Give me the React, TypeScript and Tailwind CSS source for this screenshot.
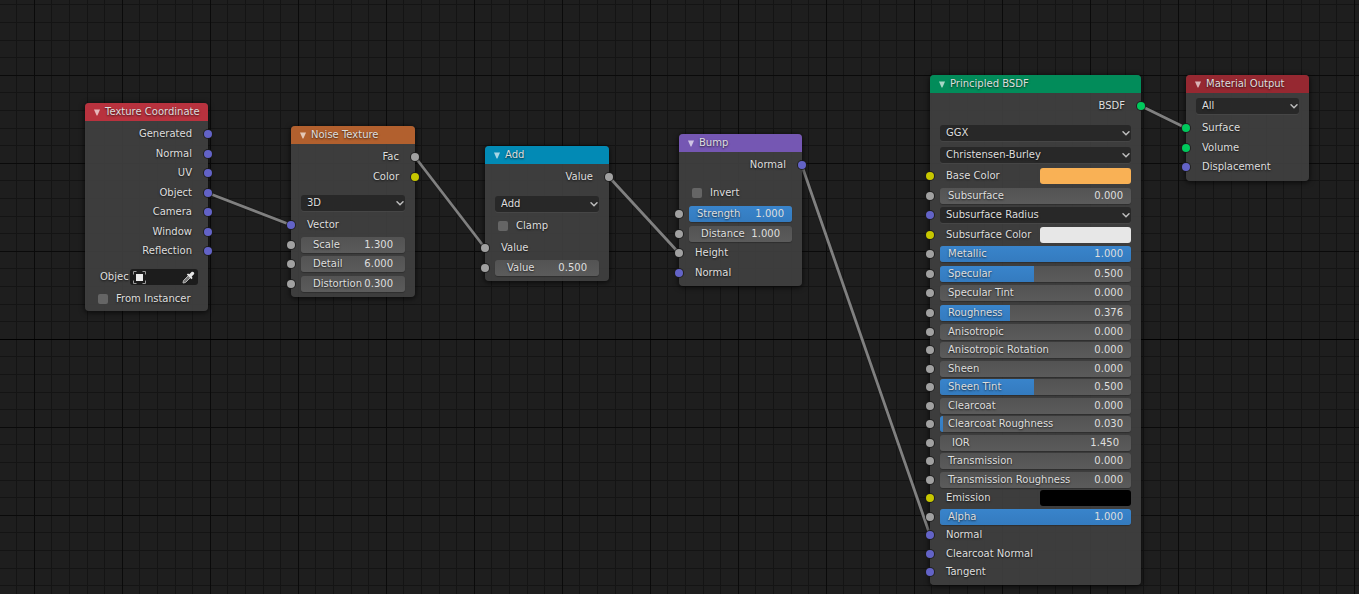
import { ReactNode, useId } from "react";

type SocketKind = "vector" | "value" | "color" | "shader";

const socketColors: Record<SocketKind, string> = {
  vector: "bg-[#6363c7]",
  value: "bg-[#a1a1a1]",
  color: "bg-[#c7c700]",
  shader: "bg-[#00c95c]",
};

interface SocketProps {
  kind: SocketKind;
  side: "left" | "right";
}

function Socket({ kind, side }: SocketProps) {
  return (
    <span
      className={`absolute top-1/2 size-2 -translate-y-1/2 rounded-full ring-1 ring-[#1a1a1a]/80 ${
        side === "left" ? "-left-1" : "-right-1"
      } ${socketColors[kind]}`}
    />
  );
}

interface RowProps {
  input?: SocketKind;
  output?: SocketKind;
  tight?: boolean;
  children: ReactNode;
}

function Row({ input, output, tight, children }: RowProps) {
  return (
    <li
      className={`relative flex items-center px-2.5 ${
        tight ? "odd:h-[19px] even:h-[18px]" : "odd:h-5 even:h-[19px]"
      }`}
    >
      {input && <Socket kind={input} side="left" />}
      {children}
      {output && <Socket kind={output} side="right" />}
    </li>
  );
}

function Output({ label, kind }: { label: string; kind: SocketKind }) {
  return (
    <Row output={kind}>
      <span className="ml-auto pr-1.5">{label}</span>
    </Row>
  );
}

function Input({ label, kind, tight }: { label: string; kind: SocketKind; tight?: boolean }) {
  return (
    <Row input={kind} tight={tight}>
      <span className="pl-1.5">{label}</span>
    </Row>
  );
}

interface FieldProps {
  label: string;
  value: string;
  // share of the bar that is filled, left out for plain number fields
  fill?: number;
  tight?: boolean;
}

function Field({ label, value, fill, tight }: FieldProps) {
  const id = useId();
  const isSlider = fill !== undefined;
  return (
    <Row input="value" tight={tight}>
      <div
        className={`relative flex h-4 w-full items-center overflow-hidden rounded-[3px] bg-linear-to-b from-[#535353] to-[#5b5b5b] shadow-[0_1px_1px_rgba(0,0,0,0.25)] ${
          isSlider ? "px-2" : "px-3"
        }`}
      >
        {isSlider && (
          <span
            className="absolute inset-y-0 left-0 bg-linear-to-b from-[#3984cb] to-[#347bbf]"
            style={{ width: `${fill * 100}%` }}
          />
        )}
        <label htmlFor={id} className="relative whitespace-nowrap">
          {label}
        </label>
        <input
          id={id}
          defaultValue={value}
          className="relative ml-auto w-[29px] shrink-0 bg-transparent text-right outline-none"
        />
      </div>
    </Row>
  );
}

function Swatch({ label, color, tight }: { label: string; color: string; tight?: boolean }) {
  return (
    <Row input="color" tight={tight}>
      <span className="flex-1 pl-1.5">{label}</span>
      <button aria-label={label} className={`h-4 w-[91px] rounded-[3px] ${color}`} />
    </Row>
  );
}

function Dropdown({ label, options }: { label: string; options: string[] }) {
  return (
    <div className="relative h-4 w-full">
      <select
        aria-label={label}
        className="block h-4 w-full appearance-none rounded-[3px] bg-[#282828] pl-1.5 pr-4 shadow-[0_1px_0_rgba(255,255,255,0.05)] outline-none [text-shadow:inherit]"
      >
        {options.map((option) => (
          <option key={option}>{option}</option>
        ))}
      </select>
      <svg
        viewBox="0 0 10 16"
        className="pointer-events-none absolute right-0 top-0 h-4 w-2.5 fill-none stroke-[#bdbdbd]"
        aria-hidden="true"
      >
        <path d="M2 6.800l3 3 3-3" strokeWidth="1.5" strokeLinecap="round" />
      </svg>
    </div>
  );
}

function Checkbox({ label }: { label: string }) {
  return (
    <label className="flex h-4 items-center gap-2 pl-[13px]">
      <input type="checkbox" className="size-[10px] appearance-none rounded-[2px] bg-[#656565]" />
      {label}
    </label>
  );
}

interface NodeProps {
  title: string;
  header: string;
  className: string;
  children: ReactNode;
}

function Node({ title, header, className, children }: NodeProps) {
  return (
    <section
      className={`absolute rounded-[4px] bg-[#404040]/93 pb-1 shadow-[0_1px_5px_1px_rgba(0,0,0,0.6)] ${className}`}
    >
      <header className={`mb-[3px] flex h-[18px] items-center gap-1 rounded-t-[4px] pl-2 ${header}`}>
        <button aria-label="Collapse">
          <svg viewBox="0 0 8 8" className="size-2 fill-white/65">
            <path d="M1 1.5h6L4.4 7.5h-.8z" />
          </svg>
        </button>
        <h2 className="whitespace-nowrap">{title}</h2>
      </header>
      {children}
    </section>
  );
}

const links = [
  [208, 193, 291, 225],
  [415, 157, 485, 248],
  [609, 177, 679, 253],
  [802, 166, 930, 535],
  [1141, 106, 1186, 128],
];

const gridSteps = [17, 35, 53, 70];

function Backdrop() {
  return (
    <svg className="absolute inset-0 size-full" aria-hidden="true">
      <defs>
        <pattern id="grid" x="34" y="75" width="88" height="88" patternUnits="userSpaceOnUse">
          {gridSteps.map((step) => (
            <g key={step} fill="#141414">
              <rect x={step} width="1" height="88" />
              <rect y={step} width="88" height="1" />
            </g>
          ))}
          <rect width="1" height="88" fill="#0a0a0a" />
          <rect width="88" height="1" fill="#0a0a0a" />
        </pattern>
      </defs>
      <rect width="100%" height="100%" fill="url(#grid)" />
      <rect y="339" width="100%" height="1" fill="#000" />
      {links.map(([x1, y1, x2, y2]) => (
        <g key={x1}>
          <line x1={x1} y1={y1} x2={x2} y2={y2} stroke="#1a1a1a" strokeWidth="4.5" />
          <line x1={x1} y1={y1} x2={x2} y2={y2} stroke="#808080" strokeWidth="2.8" />
        </g>
      ))}
    </svg>
  );
}

function TextureCoordinate() {
  const outputs = ["Generated", "Normal", "UV", "Object", "Camera", "Window", "Reflection"];
  return (
    <Node title="Texture Coordinate" header="bg-[#b8323e]" className="left-[85px] top-[103px] w-[123px]">
      <ul>
        {outputs.map((label) => (
          <Output key={label} label={label} kind="vector" />
        ))}
      </ul>
      <div className="mt-2 flex h-4 items-center justify-between pl-[15px] pr-2.5">
        <span>Objec</span>
        <div className="flex h-4 w-[68px] items-center justify-between rounded-[3px] bg-[#1c1c1c] px-[3px]">
          <button aria-label="Object">
            <svg viewBox="0 0 13 13" className="size-[13px]">
              <path
                d="M.5 3.5v-3h3M9.500 .5h3v3M12.500 9.500v3h-3M3.500 12.500h-3v-3"
                fill="none"
                stroke="#9a9a9a"
              />
              <rect x="3" y="3" width="7" height="7" fill="#ececec" />
            </svg>
          </button>
          <button aria-label="Eyedropper">
            <svg viewBox="0 0 13 13" className="size-[13px]">
              <path
                d="M6.500 4.500L1.500 9.500 1 12l2.500-.5 5-5"
                fill="#777"
                stroke="#b5b5b5"
                strokeLinejoin="round"
              />
              <path
                d="M4.800 3.600l1.200-1.200 1.300.8L9.300 1.200c1.600-1.600 4 .8 2.400 2.400L9.700 5.600l.9 1.400-1.200 1.200z"
                fill="#e6e6e6"
              />
            </svg>
          </button>
        </div>
      </div>
      <div className="mt-1.5">
        <Checkbox label="From Instancer" />
      </div>
    </Node>
  );
}

function NoiseTexture() {
  return (
    <Node title="Noise Texture" header="bg-[#b2602e]" className="left-[291px] top-[126px] w-[124px]">
      <ul>
        <Output label="Fac" kind="value" />
        <Output label="Color" kind="color" />
      </ul>
      <div className="mb-1 mt-[9px] px-2.5">
        <Dropdown label="Dimensions" options={["3D", "1D", "2D", "4D"]} />
      </div>
      <ul>
        <Input label="Vector" kind="vector" />
        <Field label="Scale" value="1.300" />
        <Field label="Detail" value="6.000" />
        <Field label="Distortion" value="0.300" />
      </ul>
    </Node>
  );
}

function MathAdd() {
  return (
    <Node title="Add" header="bg-[#028ab5]" className="left-[485px] top-[146px] w-[124px]">
      <ul>
        <Output label="Value" kind="value" />
      </ul>
      <div className="mt-[9px] px-2.5">
        <Dropdown label="Operation" options={["Add", "Subtract", "Multiply", "Divide"]} />
      </div>
      <div className="mb-1 mt-1.5">
        <Checkbox label="Clamp" />
      </div>
      <ul>
        <Input label="Value" kind="value" />
        <Field label="Value" value="0.500" />
      </ul>
    </Node>
  );
}

function Bump() {
  return (
    <Node title="Bump" header="bg-[#7557b3]" className="left-[679px] top-[134px] w-[123px]">
      <ul>
        <Output label="Normal" kind="vector" />
      </ul>
      <div className="mb-[3px] mt-2.5">
        <Checkbox label="Invert" />
      </div>
      <ul>
        <Field label="Strength" value="1.000" fill={1} />
        <Field label="Distance" value="1.000" />
        <Input label="Height" kind="value" />
        <Input label="Normal" kind="vector" />
      </ul>
    </Node>
  );
}

function PrincipledBsdf() {
  return (
    <Node title="Principled BSDF" header="bg-[#028c5a]" className="left-[930px] top-[75px] w-[211px]">
      <ul>
        <Output label="BSDF" kind="shader" />
      </ul>
      <div className="mb-[3px] mt-[9px] flex flex-col gap-1.5 px-2.5">
        <Dropdown label="Distribution" options={["GGX", "Multiscatter GGX"]} />
        <Dropdown label="Subsurface Method" options={["Christensen-Burley", "Random Walk"]} />
      </div>
      <ul>
        <Swatch label="Base Color" color="bg-[#f9b155]" />
        <Field label="Subsurface" value="0.000" fill={0} />
        <Row input="vector">
          <Dropdown label="Radius" options={["Subsurface Radius"]} />
        </Row>
        <Swatch label="Subsurface Color" color="bg-[#e7e7e7]" />
        <Field label="Metallic" value="1.000" fill={1} />
        <Field label="Specular" value="0.500" fill={0.49} />
        <Field label="Specular Tint" value="0.000" fill={0} />
        <Field label="Roughness" value="0.376" fill={0.366} />
      </ul>
      <ul>
        <Field tight label="Anisotropic" value="0.000" fill={0} />
        <Field tight label="Anisotropic Rotation" value="0.000" fill={0} />
        <Field tight label="Sheen" value="0.000" fill={0} />
        <Field tight label="Sheen Tint" value="0.500" fill={0.49} />
        <Field tight label="Clearcoat" value="0.000" fill={0} />
        <Field tight label="Clearcoat Roughness" value="0.030" fill={0.016} />
        <Field tight label="IOR" value="1.450" />
        <Field tight label="Transmission" value="0.000" fill={0} />
        <Field tight label="Transmission Roughness" value="0.000" fill={0} />
        <Swatch tight label="Emission" color="bg-black" />
        <Field tight label="Alpha" value="1.000" fill={1} />
        <Input tight label="Normal" kind="vector" />
        <Input tight label="Clearcoat Normal" kind="vector" />
        <Input tight label="Tangent" kind="vector" />
      </ul>
    </Node>
  );
}

function MaterialOutput() {
  return (
    <Node title="Material Output" header="bg-[#962831]" className="left-[1186px] top-[75px] w-[123px]">
      <div className="mb-1 mt-[5px] px-2.5">
        <Dropdown label="Target" options={["All", "Eevee", "Cycles"]} />
      </div>
      <ul>
        <Input label="Surface" kind="shader" />
        <Input label="Volume" kind="shader" />
        <Input label="Displacement" kind="vector" />
      </ul>
    </Node>
  );
}

export default function App() {
  return (
    <main className="relative min-h-screen overflow-hidden bg-[#1e1e1e] font-['DejaVu_Sans',sans-serif] text-[10px] leading-4 text-[#dedede] [text-shadow:0_1px_2px_rgba(0,0,0,0.7)]">
      <Backdrop />
      <TextureCoordinate />
      <NoiseTexture />
      <MathAdd />
      <Bump />
      <PrincipledBsdf />
      <MaterialOutput />
    </main>
  );
}
